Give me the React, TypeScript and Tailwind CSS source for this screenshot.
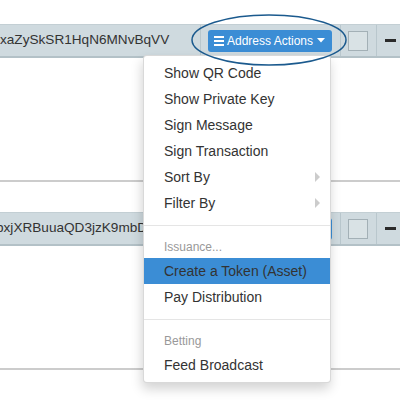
import React from 'react';

interface PanelProps {
  address: string;
  offset: string;
}

function Hamburger() {
  return (
    <span className="flex flex-col gap-[2px] w-[10px]">
      <span className="h-[2px] bg-white" />
      <span className="h-[2px] bg-white" />
      <span className="h-[2px] bg-white" />
    </span>
  );
}

function AddressPanel({ address, offset }: PanelProps) {
  return (
    <div className="border-b-2 border-[#cccccc]">
      {/* header bar */}
      <div className="flex h-[34px] items-stretch bg-[#cfdadf] border-t border-[#c3cfd4] border-b-2 border-b-[#b3c1c7]">
        <div className="w-[200px] overflow-hidden whitespace-nowrap flex items-center text-[13.6px]">
          <span className={offset}>{address}</span>
        </div>
        <div className="flex items-center border-l border-[#b9c7cd] pl-[7px] pr-[8px]">
          <button className="h-[22px] w-[124px] flex items-center pl-[6px] pr-[6px] gap-[3px] rounded-[3px] bg-[#3b8dd5] text-white text-[12px]">
            <Hamburger />
            <span className="leading-none">Address Actions</span>
            <svg width="8" height="5" viewBox="0 0 8 5" className="ml-[1px]">
              <path d="M0 0 H8 L4 4.5 Z" fill="white" />
            </svg>
          </button>
        </div>
        <div className="w-[36px] flex items-center pl-[7px] border-l border-[#b9c7cd]">
          <div className="w-[20px] h-[20px] bg-[#d9e2e5] border border-[#a3b0b6]" />
        </div>
        <div className="flex-1 flex items-center pl-[8px] border-l border-[#b9c7cd]">
          <div className="w-[11px] h-[3px] bg-[#2b2b2b]" />
        </div>
      </div>
      <div className="h-[122px]" />
    </div>
  );
}

function Caret() {
  return (
    <svg width="5" height="10" viewBox="0 0 5 10">
      <path d="M0 0 L5 5 L0 10 Z" fill="#cccccc" />
    </svg>
  );
}

function MenuItem({ label, sub, active }: { label: string; sub?: boolean; active?: boolean }) {
  return (
    <div
      className={
        'h-[26px] flex items-center justify-between pl-[20px] pr-[10px] text-[14px] text-[#333] ' +
        (active ? 'bg-[#3b8dd5]' : '')
      }
    >
      <span>{label}</span>
      {sub && <Caret />}
    </div>
  );
}

function MenuHeader({ label }: { label: string }) {
  return <div className="h-[23px] flex items-center px-[20px] text-[12px] text-[#999999]">{label}</div>;
}

function Divider() {
  return <div className="my-[9px] h-px bg-[#e5e5e5]" />;
}

export default function App() {
  return (
    <div className="relative w-[400px] h-[400px] overflow-hidden bg-white text-[#333] font-['Liberation_Sans',Arial,sans-serif]">
      <div className="pt-[24px]">
        <AddressPanel address="xaZySkSR1HqN6MNvBqVV" offset="ml-0" />
        <div className="h-[30px]" />
        <AddressPanel address="bxjXRBuuaQD3jzK9mbDwTf4" offset="ml-[-4px]" />
      </div>

      {/* dropdown */}
      <div className="absolute left-[143px] top-[55px] w-[188px] py-[4px] bg-white border border-black/15 rounded-[4px] shadow-[-1px_6px_12px_rgba(0,0,0,0.175)]">
        <MenuItem label="Show QR Code" />
        <MenuItem label="Show Private Key" />
        <MenuItem label="Sign Message" />
        <MenuItem label="Sign Transaction" />
        <MenuItem label="Sort By" sub />
        <MenuItem label="Filter By" sub />
        <Divider />
        <MenuHeader label="Issuance..." />
        <MenuItem label="Create a Token (Asset)" active />
        <MenuItem label="Pay Distribution" />
        <Divider />
        <MenuHeader label="Betting" />
        <MenuItem label="Feed Broadcast" />
      </div>

      {/* annotation ring */}
      <svg className="absolute left-0 top-0 pointer-events-none" width="400" height="400">
        <ellipse cx="269" cy="40" rx="77" ry="25" fill="none" stroke="#1b5a8e" strokeWidth="1.5" />
      </svg>
    </div>
  );
}
